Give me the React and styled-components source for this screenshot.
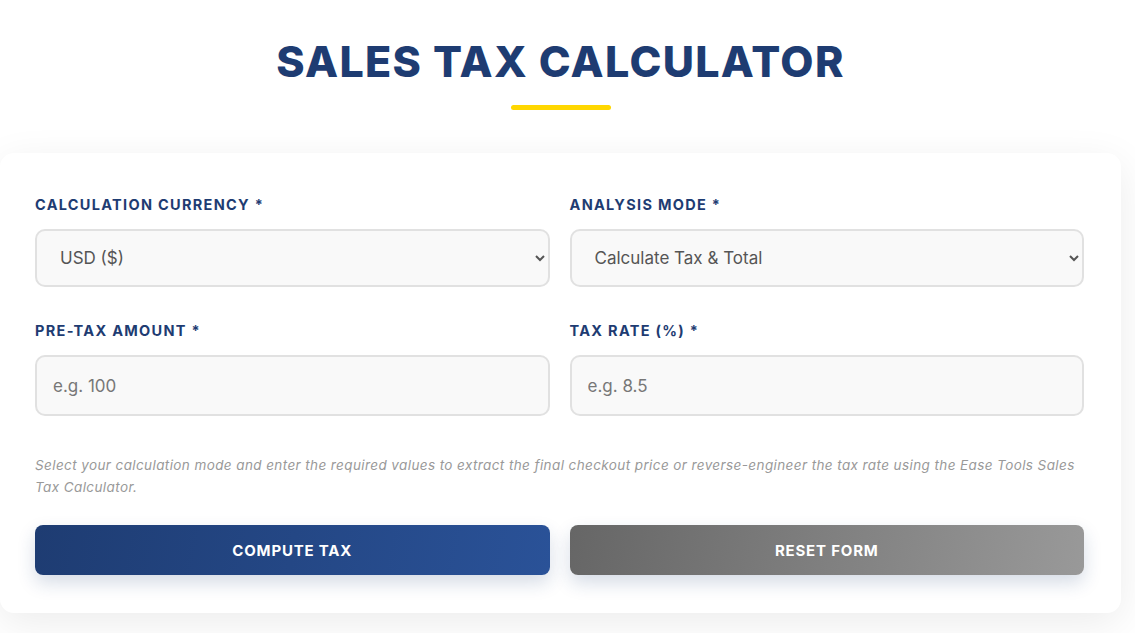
import React from 'react';
import styled, { createGlobalStyle } from 'styled-components';

const GlobalStyle = createGlobalStyle`
    * {
        box-sizing: border-box;
    }
    body {
        margin: 0;
        background: #ffffff;
        font-family: "Inter", "Open Sans", sans-serif;
    }
`;

const App = () => {

    return (
        <React.Fragment>
            <GlobalStyle />
            <Page>
                <Header>
                    <Title>Sales Tax Calculator</Title>
                    <Underline />
                </Header>
                <Card>
                    <Grid>
                        <Field>
                            <Label>Calculation Currency *</Label>
                            <Select defaultValue="usd">
                                <option value="usd">USD ($)</option>
                                <option value="eur">EUR (€)</option>
                                <option value="gbp">GBP (£)</option>
                            </Select>
                        </Field>
                        <Field>
                            <Label>Analysis Mode *</Label>
                            <Select defaultValue="forward">
                                <option value="forward">Calculate Tax &amp; Total</option>
                                <option value="reverse">Find Tax Rate</option>
                            </Select>
                        </Field>
                        <Field>
                            <Label>Pre-Tax Amount *</Label>
                            <Input type="text" placeholder="e.g. 100" />
                        </Field>
                        <Field>
                            <Label>Tax Rate (%) *</Label>
                            <Input type="text" placeholder="e.g. 8.5" />
                        </Field>
                    </Grid>
                    <Hint>
                        Select your calculation mode and enter the required values to extract the final checkout price or reverse-engineer the tax rate using the Ease Tools Sales Tax Calculator.
                    </Hint>
                    <BtnBox>
                        <Button>Compute Tax</Button>
                        <Button $secondary>Reset Form</Button>
                    </BtnBox>
                </Card>
            </Page>
        </React.Fragment>
    );
};

const Page = styled.div`
    width: 1121px;
    padding: 34px 0 20px;
`;

const Header = styled.div`
    display: flex;
    flex-direction: column;
    align-items: center;
    margin-bottom: 43px;
`;

const Title = styled.h1`
    margin: 0;
    font-family: "Inter", sans-serif;
    font-size: 43px;
    font-weight: 800;
    line-height: 55px;
    letter-spacing: 1.3px;
    text-transform: uppercase;
    color: #1e3c72;
`;

const Underline = styled.div`
    width: 100px;
    height: 5px;
    margin-top: 16px;
    border-radius: 3px;
    background: #ffd700;
`;

const Card = styled.div`
    background: #ffffff;
    border-radius: 14px;
    padding: 42px 37px 38px 35px;
    box-shadow: 0 10px 40px rgba(0, 0, 0, 0.08);
`;

const Grid = styled.div`
    display: grid;
    grid-template-columns: 1fr 1fr;
    column-gap: 20px;
    row-gap: 34px;
`;

const Field = styled.div`
    display: flex;
    flex-direction: column;
`;

const Label = styled.label`
    font-size: 14.5px;
    font-weight: 700;
    line-height: 20px;
    letter-spacing: 1.3px;
    text-transform: uppercase;
    color: #1e3c72;
    margin-bottom: 14px;
`;

const Select = styled.select`
    height: 58px;
    padding: 0 14px 0 19px;
    border: 2px solid #e1e1e1;
    border-radius: 10px;
    background-color: #f9f9f9;
    font-family: "Inter", sans-serif;
    font-size: 17px;
    color: #555555;
    outline: none;
`;

const Input = styled.input`
    height: 61px;
    padding: 0 16px;
    border: 2px solid #e1e1e1;
    border-radius: 10px;
    background: #f9f9f9;
    font-family: "Inter", sans-serif;
    font-size: 17px;
    color: #555555;
    outline: none;
    &::placeholder {
        color: #777777;
    }
`;

const Hint = styled.p`
    margin: 38px 0 27px;
    font-size: 13.5px;
    font-style: italic;
    line-height: 22px;
    letter-spacing: 0.4px;
    color: #999999;
`;

const BtnBox = styled.div`
    display: grid;
    grid-template-columns: 1fr 1fr;
    gap: 20px;
`;

const Button = styled.button`
    height: 50px;
    border: none;
    border-radius: 8px;
    font-family: "Inter", sans-serif;
    font-size: 15px;
    font-weight: 700;
    letter-spacing: 0.8px;
    text-transform: uppercase;
    color: #ffffff;
    cursor: pointer;
    background: ${(props) => props.$secondary
        ? 'linear-gradient(100deg, #666666, #999999)'
        : 'linear-gradient(100deg, #1e3c72, #2a5298)'};
    box-shadow: 0 8px 18px rgba(30, 60, 114, 0.18);
`;

export default App;
